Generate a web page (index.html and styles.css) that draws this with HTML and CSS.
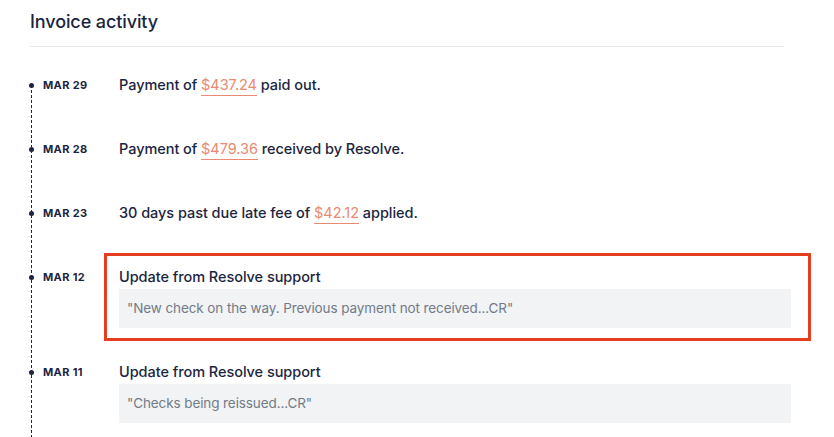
FILE: index.html
```html
<!DOCTYPE html>
<html lang="en">
<head>
<meta charset="utf-8">
<title>Invoice activity</title>
<link rel="stylesheet" href="styles.css">
</head>
<body>
<main class="panel">
  <h2 class="panel-title">Invoice activity</h2>
  <hr class="divider">
  <ol class="timeline">
    <li class="event">
      <span class="event-date">MAR 29</span>
      <div class="event-body">
        <p class="event-text">Payment of <span class="amount">$437.24</span> paid out.</p>
      </div>
    </li>
    <li class="event">
      <span class="event-date">MAR 28</span>
      <div class="event-body">
        <p class="event-text">Payment of <span class="amount">$479.36</span> received by Resolve.</p>
      </div>
    </li>
    <li class="event">
      <span class="event-date">MAR 23</span>
      <div class="event-body">
        <p class="event-text">30 days past due late fee of <span class="amount">$42.12</span> applied.</p>
      </div>
    </li>
    <li class="event event--note">
      <span class="event-date">MAR 12</span>
      <div class="event-body is-highlighted">
        <p class="event-text">Update from Resolve support</p>
        <p class="note">"New check on the way. Previous payment not received...CR"</p>
      </div>
    </li>
    <li class="event event--note">
      <span class="event-date">MAR 11</span>
      <div class="event-body">
        <p class="event-text">Update from Resolve support</p>
        <p class="note">"Checks being reissued...CR"</p>
      </div>
    </li>
  </ol>
</main>
</body>
</html>
```

FILE: styles.css
```css
* { box-sizing: border-box; }

html, body {
  margin: 0;
  background: #ffffff;
  height: 100%;
  overflow: hidden;
}

body {
  font-family: Inter, "Noto Sans", "Liberation Sans", sans-serif;
  color: #1c2540;
}

.panel {
  padding: 9px 0 0 30px;
  width: 784px;
}

.panel-title {
  margin: 0;
  font-size: 18px;
  font-weight: 500;
  line-height: 26px;
  letter-spacing: -0.1px;
  color: #1c2540;
}

.divider {
  margin: 11px 0 0 0;
  border: 0;
  border-top: 1px solid #e8eaed;
  height: 0;
}

.timeline {
  list-style: none;
  margin: 28px 0 0 1px;
  padding: 0;
  position: relative;
}

.timeline::before {
  content: "";
  position: absolute;
  left: 0;
  top: 10px;
  bottom: -40px;
  border-left: 1px dashed #1c2540;
}

.event {
  display: grid;
  grid-template-columns: 76px 1fr;
  padding-left: 12px;
  margin-bottom: 44px;
  position: relative;
}

.event::before {
  content: "";
  position: absolute;
  left: -2px;
  top: 8px;
  width: 5px;
  height: 5px;
  border-radius: 50%;
  background: #1c2540;
}

.event--note { margin-bottom: 34px; }

.event-date {
  font-size: 11px;
  font-weight: 700;
  letter-spacing: 0.35px;
  line-height: 20px;
  color: #1c2540;
}

.event-body {
  position: relative;
  width: 672px;
}

.event-text {
  margin: 0;
  font-size: 14.5px;
  line-height: 20px;
  font-weight: 500;
  letter-spacing: -0.05px;
  color: #1c2540;
}

.amount {
  color: #ea8a73;
  border-bottom: 1px solid #ea8a73;
  padding-bottom: 2px;
  font-weight: 400;
}

.note {
  margin: 2px 0 0 0;
  background: #f1f3f5;
  height: 39px;
  padding: 0 8px;
  font-size: 13.5px;
  line-height: 39px;
  letter-spacing: -0.1px;
  color: #737b88;
}

.is-highlighted::after {
  content: "";
  position: absolute;
  top: -14px;
  left: -15px;
  right: -20px;
  bottom: -13px;
  border: 3px solid #e43d1f;
  pointer-events: none;
}
```
